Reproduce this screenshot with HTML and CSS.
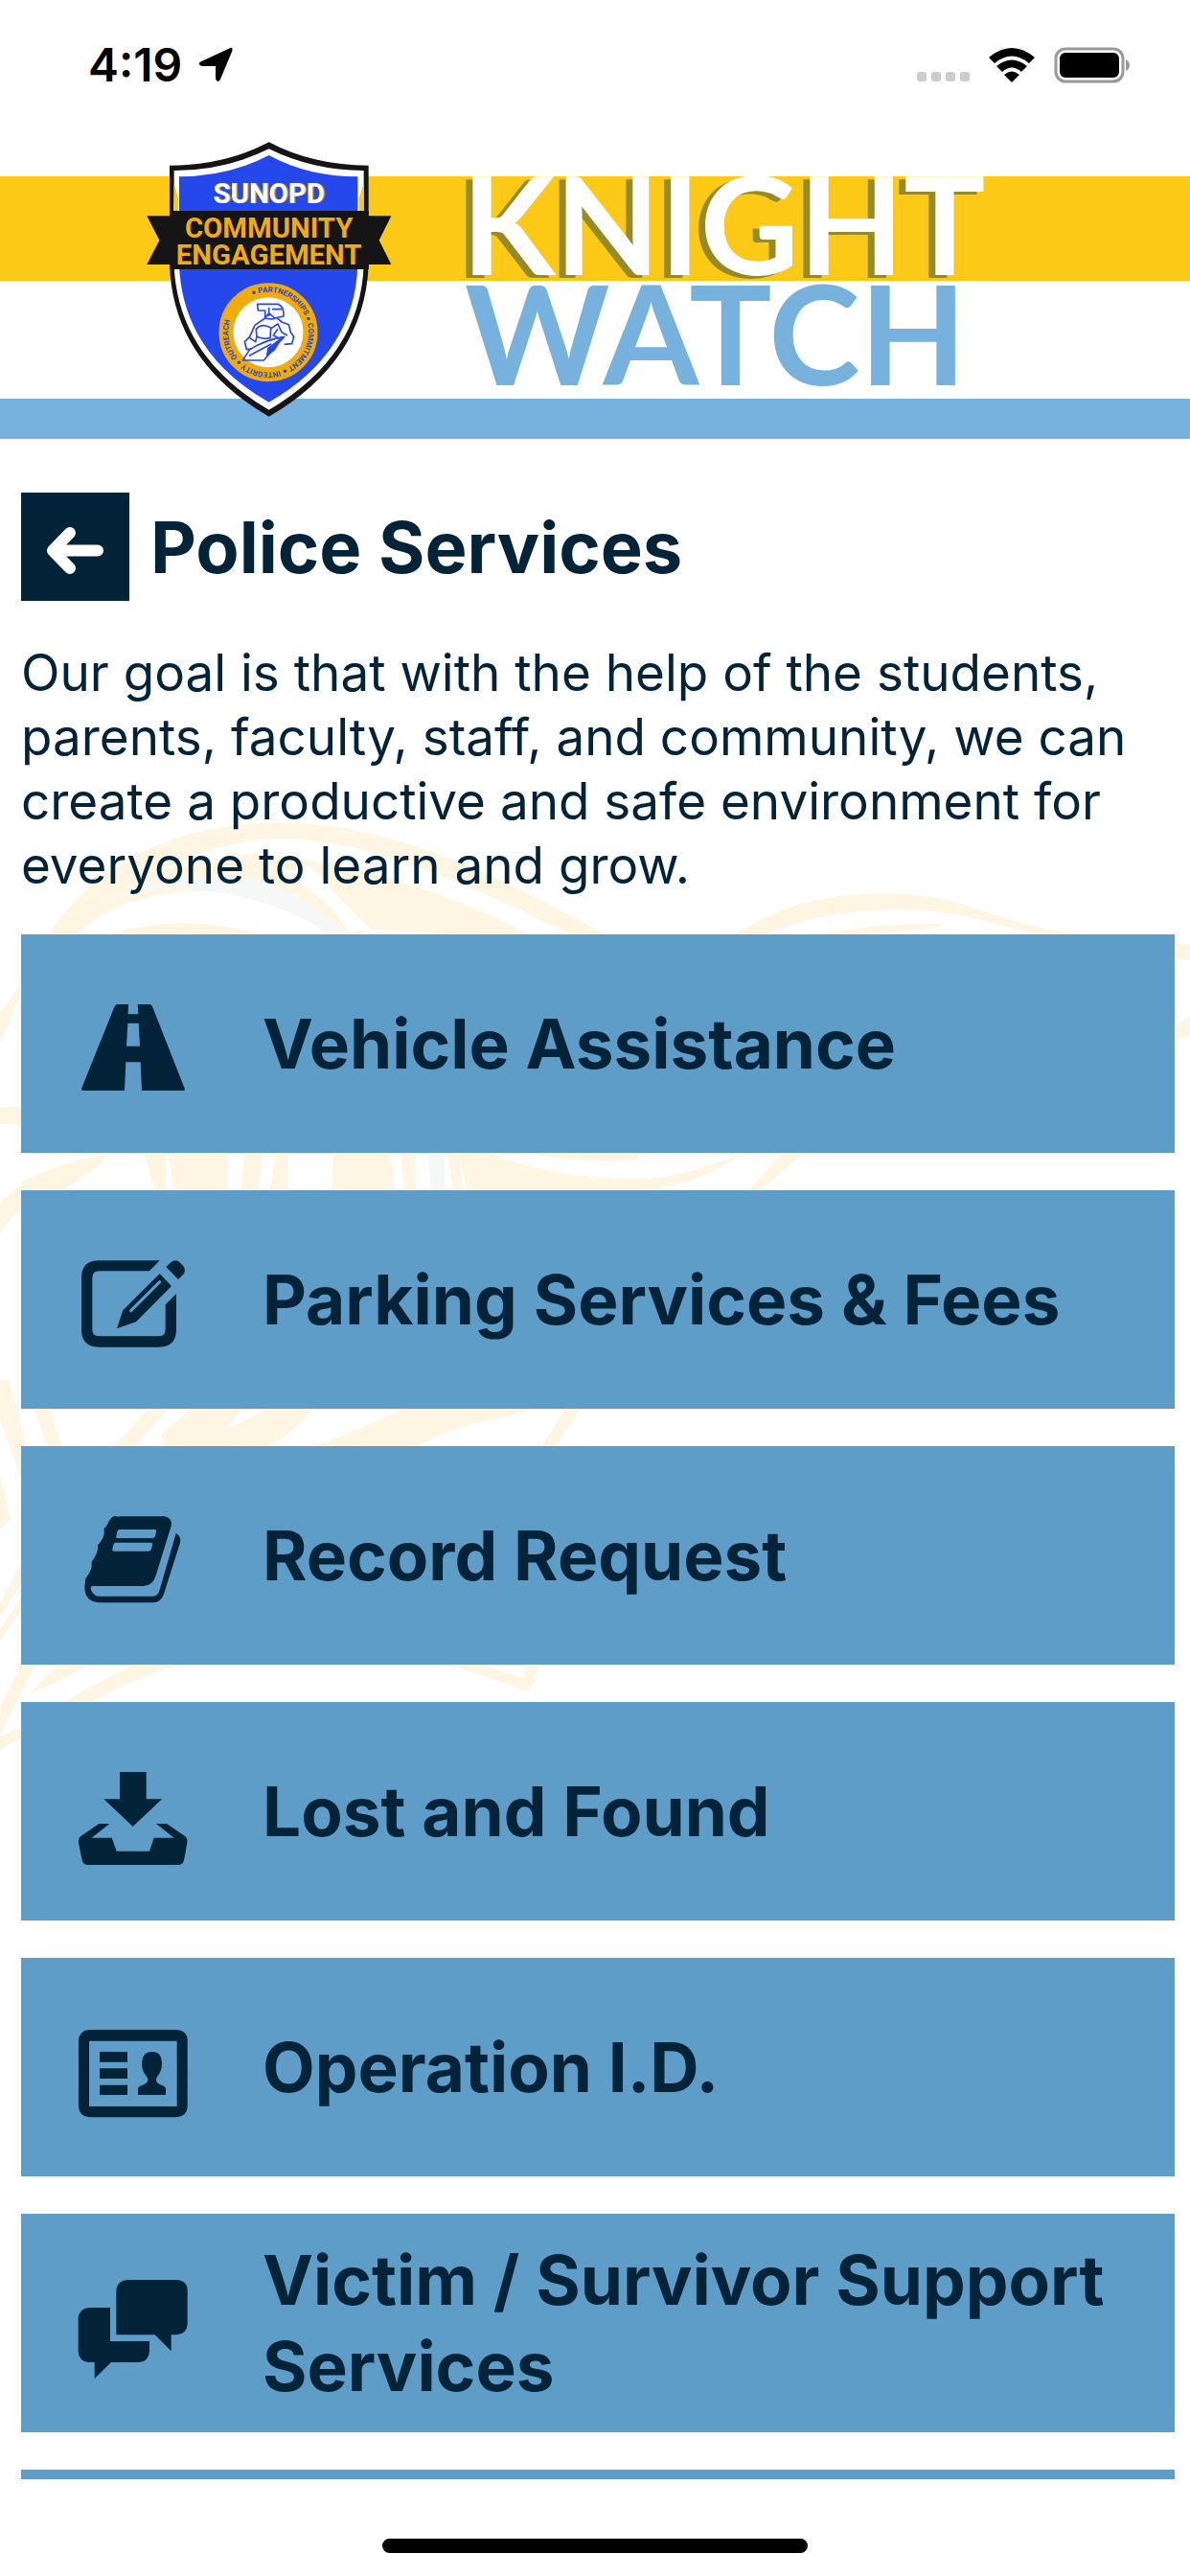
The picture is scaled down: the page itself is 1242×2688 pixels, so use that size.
FILE: index.html
```html
<!DOCTYPE html>
<html lang="en">
<head>
<meta charset="utf-8">
<meta name="viewport" content="width=device-width, initial-scale=1">
<title>Police Services</title>
<link rel="stylesheet" href="styles.css">
</head>
<body>
<div class="status">
  <div class="status-left">
    <span class="time">4:19</span>
    <svg class="locate" viewBox="0 0 40 40" aria-hidden="true"><path d="M34 2Q40-1 38 5L25 36Q22 40 20 35V21H5Q-1 19 4 16Z"/></svg>
  </div>
  <div class="status-right">
    <svg class="dots" viewBox="0 0 55 10" aria-hidden="true"><g fill="#ccc"><rect width="10" height="10" rx="3"/><rect x="15" width="10" height="10" rx="3"/><rect x="30" width="10" height="10" rx="3"/><rect x="45" width="10" height="10" rx="3"/></g></svg>
    <svg class="wifi" viewBox="0 0 48 36" aria-hidden="true"><path d="M0 10Q24-10 48 10L42 16Q24 1 6 16ZM8 19Q24 6 40 19L34 25Q24 16 14 25ZM16 28Q24 21 32 28L24 36Z"/></svg>
    <svg class="battery" viewBox="0 0 80 38" aria-hidden="true"><rect x="2" y="2" width="70" height="34" rx="10" fill="none" stroke="#999" stroke-width="3"/><rect x="6" y="6" width="62" height="26" rx="6"/><path d="M75 13Q79 15 79 19T75 25Z" fill="#999"/></svg>
  </div>
</div>

<header>
  <svg class="banner" viewBox="0 0 1242 318" role="img" aria-label="Knight Watch">
    <rect y="44" width="1242" height="109" fill="#fcc917"/>
    <rect y="276" width="1242" height="42" fill="#77b1de"/>
    <svg x="440" y="44" width="640" height="109" viewBox="440 44 640 109">
      <text class="word knight" x="482" y="147" fill="#fff">KNIGHT</text>
    </svg>
    <text class="word" x="485" y="262" fill="#77b1de">WATCH</text>
    <g transform="translate(130 -10) scale(.33333)">
      <path d="M452 55Q590 128 764 128V440Q752 740 452 914Q152 740 141 440V128Q314 128 452 55Z" fill="#151515"/>
      <path d="M452 76Q590 144 749 144V440Q738 725 452 893Q166 725 155 440V144Q314 144 452 76Z" fill="#fff"/>
      <path d="M155 185L168 230V270H153ZM749 185L734 230V270H749Z" fill="#fcc917"/>
      <path d="M452 96Q575 163 730 163V440Q720 715 452 869Q182 715 171 440V163Q325 163 452 96Z" fill="#2548ec"/>
      <path d="M70 286H141V270H764V286H835L797 362L835 438H764V453H141V438H70L109 362Z" fill="#151515"/>
      <g font-weight="700" text-anchor="middle">
        <text class="badge-text unit" x="452" y="247" fill="#fff">SUNOPD</text>
        <text class="badge-text" x="452" y="353" fill="#f0ab0e">COMMUNITY</text>
        <text class="badge-text" x="452" y="438" fill="#f0ab0e">ENGAGEMENT</text>
      </g>
      <circle cx="450" cy="650" r="132" fill="#fff" stroke="#f0ab0e" stroke-width="45"/>
      <path id="ring" d="M400 535A125 125 0 0 1 500 765A125 125 0 0 1 400 535" fill="none"/>
      <text class="ring-text" fill="#3149b0"><textPath href="#ring">● PARTNERSHIPS ● COMMITMENT ● INTEGRITY ● OUTREACH</textPath></text>
      <g fill="none" stroke="#2548ec" stroke-width="5" stroke-linejoin="round">
        <path d="M416 562H480Q500 568 498 600L470 606 452 590 440 606V582H418ZM452 572V600M462 578H492M440 606L408 628 392 664 376 680 382 704 398 702M440 606Q468 612 476 604L492 618 514 626 520 650 530 664 524 686 500 688M412 640Q430 620 458 636L456 668Q436 674 414 664ZM456 640L480 624 492 650 510 660M480 640L466 660 490 672M392 668L410 680 414 664"/>
        <path d="M370 738L392 704Q440 674 500 664L476 690 436 738ZM390 724L460 686"/>
        <path d="M450 700L490 670 468 706 446 722Z" fill="#2548ec"/>
      </g>
    </g>
  </svg>
</header>

<main>
  <svg class="watermark" viewBox="0 0 1242 1400" aria-hidden="true">
    <g fill="#fef5e2">
      <g transform="translate(0 382) scale(.7921 .33333)">
        <path d="M65 408C120 190 230 55 370 55C540 60 690 270 800 408H755C640 280 500 105 365 105C240 120 150 280 100 408Z"/>
        <path d="M78 408C130 250 200 190 290 180L300 150C400 165 520 190 700 408H590Q540 390 490 390L470 408H430C370 250 190 200 100 408Z"/>
        <path d="M110 350C170 220 290 190 350 240Q410 300 460 408L430 400C370 290 190 180 110 350Z" fill="#f6f8f8"/>
        <path d="M115 408Q170 275 250 280Q350 290 420 408Z" fill="#fff"/>
        <path d="M410 190Q440 280 490 390L460 400Q430 280 370 210Z" fill="#fff"/>
        <path d="M140 408Q190 370 250 370Q310 378 345 408Z"/>
        <path d="M965 408C1020 330 1070 278 1170 276C1280 282 1310 375 1430 408H1370C1280 350 1240 325 1170 328C1090 335 1050 365 1010 408Z"/>
        <path d="M1085 408Q1140 372 1238 372Q1250 385 1180 395L1130 408Z"/>
        <path d="M1548 435H1568V485H1548ZM1568 660V720L1548 735V690ZM28 545Q24 650 0 735V650Q18 600 28 545ZM0 945H28V1000H0ZM28 1190V1270Q12 1290 0 1345V1240Z"/>
        <path d="M28 1180Q90 1110 142 1092L130 1130L80 1209H28ZM190 1092H218V1209H204ZM222 1092H300V1209H228ZM322 1092H346L340 1209H318ZM364 1092H380V1209H355ZM438 1092H515L520 1209H438ZM528 1092H548V1209H533ZM590 1092H605L610 1209H597ZM605 1092H650Q730 1175 850 1170Q910 1160 975 1092H1058L1000 1209H970L1020 1120Q900 1190 850 1209H615Z"/>
        <path d="M655 1092H975Q910 1160 850 1168Q740 1175 655 1092ZM975 1092H1030L985 1209H850Q940 1170 975 1092Z" fill="#fff"/>
        <path d="M700 1092H840Q850 1112 820 1115Q750 1115 700 1092Z"/>
        <path d="M564 1092H586V1209H568Z" fill="#f6f8f8"/>
      </g>
      <g transform="translate(0 982) scale(.3954 .33333)">
        <path d="M0 0H22L72 210H56V310L0 120ZM0 300L28 435 0 470ZM92 93H132L162 210H125ZM390 93H442L352 210H298ZM500 93H640L590 160 700 93H825Q770 170 710 210H432L426 170ZM1060 93H1405L1330 115Q1180 150 1100 210H825Q940 160 1060 93ZM1490 93H1530L1465 210H1430Z"/>
        <path d="M56 570V640L0 740V700ZM56 720L0 815V780L56 680ZM56 894H92L0 1110V1020ZM150 894H240Q140 950 82 980ZM350 894H460Q300 960 240 1011H165Q250 950 350 894ZM1190 894H1280L1385 935V894H1420Q1420 950 1385 975Q1300 930 1190 894ZM0 1115L56 1085V1120L0 1158Z"/>
      </g>
    </g>
  </svg>

  <div class="heading">
    <button class="back" type="button" aria-label="Back"><svg viewBox="0 0 113 113" aria-hidden="true"><path d="M51 42L33 60.500L51 79M35 60.500H80" fill="none" stroke="#fff" stroke-width="12" stroke-linecap="round" stroke-linejoin="round"/></svg></button>
    <h1>Police Services</h1>
  </div>
  <p class="intro">Our goal is that with the help of the students, parents, faculty, staff, and community, we can create a productive and safe environment for everyone to learn and grow.</p>

  <ul class="menu">
    <li><a href="#vehicle"><svg viewBox="0 0 480 420" aria-hidden="true"><path fill-rule="evenodd" d="M188 87H222L221 118H253L251 87H288Q294 87 297 94L398 350Q400 357 394 357H264L260 268H214L210 357H80Q73 357 76 349L178 95Q181 87 188 87ZM220 146L216 218H258L254 146Z"/></svg><span>Vehicle Assistance</span></a></li>
    <li><a href="#parking"><svg viewBox="0 -9 480 420" aria-hidden="true"><path d="M320 79H130Q75 79 75 134V295Q75 350 130 350H317Q372 350 372 295V183L338 217V295Q338 316 317 316H130Q109 316 109 295V134Q109 112 130 112H288ZM320 120L357 159 246 271 186 292 205 235ZM340 99L355 85Q368 74 381 83L394 96Q404 110 394 122L378 138Z"/><path d="M230 236L320 146" stroke="#5f9dc9" stroke-width="9" stroke-linecap="round"/></svg><span>Parking Services &amp; Fees</span></a></li>
    <li><a href="#records"><svg viewBox="0 -18 480 420" aria-hidden="true"><path fill-rule="evenodd" d="M175 70Q183 68 188 71L196 70H335Q360 75 356 100L308 255Q298 288 268 288H110Q100 290 106 302Q114 320 132 320H298Q314 320 319 303L371 123Q388 132 384 152L333 313Q324 340 298 340H132Q84 336 85 290L88 264Q104 244 107 228V212Q124 190 126 172V160Q145 140 146 124V108Q156 100 162 84Q168 73 175 70ZM194 111H304Q311 111 309 118L306 131Q304 138 297 138H189Q182 138 184 131L187 118Q189 111 194 111ZM182 152H292Q299 152 297 159L294 172Q292 179 285 179H177Q170 179 172 172L175 159Q177 152 182 152Z"/></svg><span>Record Request</span></a></li>
    <li><a href="#lost"><svg viewBox="0 3 480 420" aria-hidden="true"><path d="M195 90H278V175H327L236 261 145 175H195ZM130 252H163L107 296H170L185 338H288L302 296H365L309 252H342L398 290Q408 297 406 311L397 362Q394 381 376 381H97Q79 381 76 362L66 311Q64 297 74 290Z"/></svg><span>Lost and Found</span></a></li>
    <li><a href="#operation-id"><svg viewBox="0 -6 480 420" aria-hidden="true"><path fill-rule="evenodd" d="M99 87H374Q407 90 407 120V328Q405 358 374 361H99Q68 358 66 328V120Q68 90 99 87ZM99 122V327H374V122ZM132 156H219V188H132ZM132 208H219V240H132ZM132 260H219V291H132ZM296 156Q328 156 327 196Q326 218 312 235Q302 248 320 258L334 264Q339 267 339 273V291H252V273Q252 267 257 264L272 258Q290 248 280 235Q265 218 264 196Q264 156 296 156Z"/></svg><span>Operation I.D.</span></a></li>
    <li><a href="#support"><svg viewBox="0 795 480 420" aria-hidden="true"><path d="M219 870H373Q407 872 407 904V1008Q405 1040 373 1042H356V1093L305 1042H184V904Q186 872 219 870ZM99 957H165V1062H288V1094Q286 1126 254 1128H168L116 1179V1128H99Q67 1126 65 1094V991Q67 959 99 957Z"/></svg><span>Victim / Survivor Support Services</span></a></li>
    <li class="next"></li>
  </ul>
</main>

<div class="home-bar"><div class="home-indicator"></div></div>
</body>
</html>
```
FILE: styles.css
```css
* { box-sizing: border-box; }

body {
  margin: 0;
  height: 100vh;
  display: flex;
  flex-direction: column;
  background: #fff;
  color: #022338;
  font-family: Inter, "Liberation Sans", sans-serif;
}

svg { display: block; }

/* Status bar */
.status {
  flex: none;
  height: 140px;
  padding: 0 62px 4px 92px;
  display: flex;
  align-items: center;
  justify-content: space-between;
  color: #000;
}
.status-left { display: flex; align-items: center; gap: 16px; }
.time { font-size: 48px; line-height: 60px; font-weight: 600; }
.locate { width: 38px; height: 38px; }
.status-right { display: flex; align-items: center; gap: 20px; }
.dots { width: 55px; height: 10px; align-self: flex-end; margin-bottom: 2px; }
.wifi { width: 48px; height: 36px; }
.battery { width: 80px; height: 38px; }

/* Banner */
header { flex: none; }
.banner { width: 100%; }
.word { font-family: Lato, sans-serif; font-weight: 700; font-size: 144px; }
.knight { font-size: 142px; filter: drop-shadow(-7px 3px 0 #948a2a); }
.badge-text { font-family: Roboto, sans-serif; font-size: 88px; }
.unit { filter: drop-shadow(4px 0 0 #e8a92a); }
.ring-text { font-family: Roboto, sans-serif; font-weight: 700; font-size: 24px; }

/* Content */
main {
  position: relative;
  flex: 1;
  min-height: 0;
  overflow: hidden;
  padding: 56px 16px 0 22px;
}
.watermark {
  position: absolute;
  left: 0;
  top: 0;
  z-index: -1;
  width: 100%;
}
.heading { display: flex; align-items: center; gap: 22px; }
.back {
  width: 113px;
  height: 113px;
  padding: 0;
  border: 0;
  background: #022338;
}
h1 { margin: 0; font-size: 74px; line-height: 90px; font-weight: 700; }
.intro { margin: 42px 0 38px; font-size: 53px; line-height: 67px; }

.menu {
  margin: 0;
  padding: 0;
  list-style: none;
  display: flex;
  flex-direction: column;
  gap: 39px;
}
.menu a {
  min-height: 228px;
  padding: 0 24px 0 38px;
  display: flex;
  align-items: center;
  gap: 54px;
  background: #5f9dc9;
  color: inherit;
  text-decoration: none;
  font-size: 71px;
  line-height: 90px;
  font-weight: 700;
}
.menu a svg { flex: none; width: 160px; height: 140px; fill: #022338; }
.next { height: 228px; background: #5f9dc9; }

/* Home indicator */
.home-bar {
  flex: none;
  height: 101px;
  display: flex;
  justify-content: center;
  align-items: flex-end;
  padding-bottom: 24px;
}
.home-indicator { width: 444px; height: 15px; border-radius: 8px; background: #000; }
```
